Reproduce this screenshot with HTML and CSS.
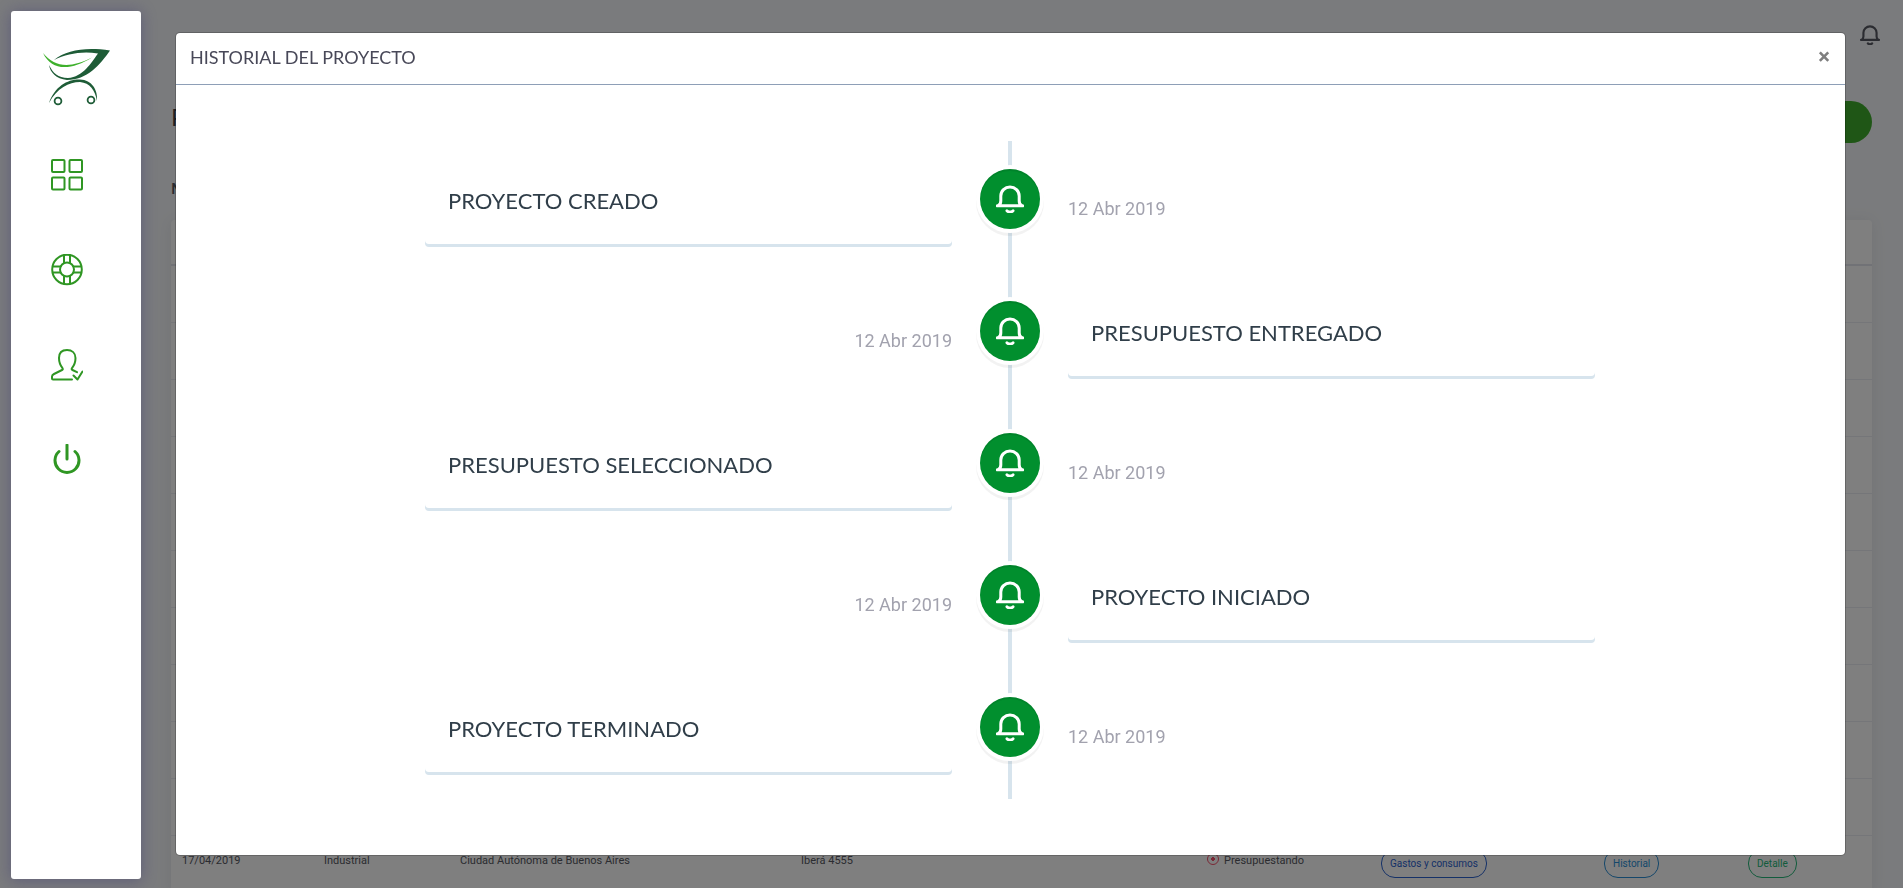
FILE: index.html
```
<!DOCTYPE html>
<html lang="es">

<head>
    <meta charset="UTF-8">
    <meta name="viewport" content="width=device-width, initial-scale=1.0">
    <title>Historial del proyecto</title>
    <link rel="stylesheet" href="styles.css">
</head>

<body>
<svg class="sprite" width="0" height="0" aria-hidden="true">
    <symbol id="bell" viewBox="0 0 28 28">
        <path d="M2 20.800q2.800-1.500 2.800-4.800V11a9.200 9 0 0 1 18.400 0v5q0 3.300 2.800 4.800M1.300 20.800h25.400" />
        <path d="M11 25.800q3 2.500 6 0" />
    </symbol>
</svg>

<nav class="sidebar" aria-label="Principal">
    <a class="logo" href="#" aria-label="Inicio">
        <svg width="68" height="58" viewBox="0 0 68 58">
            <path fill="#1e5c37" d="M11 12C24 2 42-1 67 2.500C57 17 44 32 24 32C13 31 7 24 6 17C10 25 15 30 25 30C40 29 48 15 55 5.500C38 3 24 6 11 12Z" />
            <path fill="#3eb02c" d="M0 5C12 20 28 20 49 9.500C29 22 9 24 0 5Z" />
            <path fill="#1e5c37" d="M6 55C12 38 25 31 37 31.500C49 32 55 42 54 53C52 42 47 35 37 34C26 34 14 40 6 55Z" />
            <circle cx="15" cy="53" r="3.400" fill="none" stroke="#1e5c37" stroke-width="1.800" />
            <circle cx="48" cy="52" r="3.400" fill="none" stroke="#1e5c37" stroke-width="1.800" />
        </svg>
    </a>
    <a class="item" href="#" aria-label="Panel">
        <svg width="32" height="32" viewBox="0 0 32 32">
            <rect x="1" y="1" width="12.500" height="12" rx="1" />
            <rect x="18.500" y="1" width="12.500" height="12" rx="1" />
            <rect x="1" y="18.500" width="12.500" height="12" rx="1" />
            <rect x="18.500" y="18.500" width="12.500" height="12" rx="1" />
        </svg>
    </a>
    <a class="item" href="#" aria-label="Ayuda">
        <svg width="32" height="32" viewBox="0 0 32 32">
            <circle cx="16" cy="15.500" r="14.800" />
            <circle cx="16" cy="15.500" r="7" />
            <path d="M13 1.500v7.500M19 1.500v7.500M13 22v7.500M19 22v7.500M2 12.500h7.500M2 18.500h7.500M22.500 12.500h7.500M22.500 18.500h7.500" />
        </svg>
    </a>
    <a class="item" href="#" aria-label="Usuarios">
        <svg width="32" height="32" viewBox="0 0 32 32">
            <path d="M21 30.500H2q-1 0-1-1v-2q0-1.500 2-2.500l8-4c1-.500 1-1 .500-1.800C9 16 8 14 8 9C8 4 11 1 16 1s8.500 3 8.500 8c0 5-1 7-3.500 10.200c-.600.800-.500 1.300.500 1.800l4.500 2.200" />
            <path d="M22.500 26.500l4 4 5-8" />
        </svg>
    </a>
    <a class="item" href="#" aria-label="Salir">
        <svg width="32" height="32" viewBox="0 0 32 32">
            <path d="M16 1v14M8 7.500a12 12 0 1 0 16 0" />
        </svg>
    </a>
</nav>

<main class="page">
    <header class="topbar">
        <button class="alerts" type="button" aria-label="Notificaciones"><svg width="20" height="20"><use href="#bell" /></svg></button>
    </header>
    <div class="heading">
        <h1>Proyectos</h1>
        <button class="new" type="button">Nuevo</button>
    </div>
    <h2>Mis proyectos</h2>
    <div class="card">
        <table>
            <colgroup>
                <col class="w-date"><col class="w-type"><col class="w-city"><col class="w-street">
                <col class="w-state"><col class="w-costs"><col class="w-history"><col class="w-detail">
            </colgroup>
            <thead>
                <tr><td colspan="8"></td></tr>
            </thead>
            <tbody>
                <tr><td colspan="8"></td></tr>
                <tr><td colspan="8"></td></tr>
                <tr><td colspan="8"></td></tr>
                <tr><td colspan="8"></td></tr>
                <tr><td colspan="8"></td></tr>
                <tr><td colspan="8"></td></tr>
                <tr><td colspan="8"></td></tr>
                <tr><td colspan="8"></td></tr>
                <tr><td colspan="8"></td></tr>
                <tr><td colspan="8"></td></tr>
                <tr>
                    <td>17/04/2019</td>
                    <td>Industrial</td>
                    <td>Ciudad Autónoma de Buenos Aires</td>
                    <td>Iberá 4555</td>
                    <td><span class="dot"></span>Presupuestando</td>
                    <td><button class="pill blue" type="button">Gastos y consumos</button></td>
                    <td><button class="pill sky" type="button">Historial</button></td>
                    <td><button class="pill green" type="button">Detalle</button></td>
                </tr>
            </tbody>
        </table>
    </div>
</main>

<div class="backdrop"></div>

<div class="modal" role="dialog" aria-labelledby="modal-title">
    <div class="modal-header">
        <h5 id="modal-title">HISTORIAL DEL PROYECTO</h5>
        <button class="close" type="button" aria-label="Cerrar">×</button>
    </div>
    <div class="modal-body">
        <div class="timeline">
            <div class="event">
                <div class="content"><h3>PROYECTO CREADO</h3></div>
                <div class="badge"><svg width="28" height="28"><use href="#bell" /></svg></div>
                <span class="date">12 Abr 2019</span>
            </div>
            <div class="event">
                <div class="content"><h3>PRESUPUESTO ENTREGADO</h3></div>
                <div class="badge"><svg width="28" height="28"><use href="#bell" /></svg></div>
                <span class="date">12 Abr 2019</span>
            </div>
            <div class="event">
                <div class="content"><h3>PRESUPUESTO SELECCIONADO</h3></div>
                <div class="badge"><svg width="28" height="28"><use href="#bell" /></svg></div>
                <span class="date">12 Abr 2019</span>
            </div>
            <div class="event">
                <div class="content"><h3>PROYECTO INICIADO</h3></div>
                <div class="badge"><svg width="28" height="28"><use href="#bell" /></svg></div>
                <span class="date">12 Abr 2019</span>
            </div>
            <div class="event">
                <div class="content"><h3>PROYECTO TERMINADO</h3></div>
                <div class="badge"><svg width="28" height="28"><use href="#bell" /></svg></div>
                <span class="date">12 Abr 2019</span>
            </div>
        </div>
    </div>
</div>
</body>

</html>
```
FILE: styles.css
```
* {
    box-sizing: border-box;
}

body {
    margin: 0;
    height: 100vh;
    overflow: hidden;
    background-color: #f5f7fa;
    color: #575962;
    font-family: Roboto, sans-serif;
    font-size: 11px;
}

h1,
h2,
h3,
h5 {
    margin: 0;
    font-family: Lato, sans-serif;
    font-weight: 400;
}

button {
    font-family: inherit;
    cursor: pointer;
}

svg {
    display: block;
    fill: none;
    stroke: currentColor;
    stroke-linecap: round;
    stroke-linejoin: round;
}

.sprite {
    position: absolute;
}

/* sidebar */
.sidebar {
    position: fixed;
    top: 11px;
    bottom: 9px;
    left: 11px;
    z-index: 20;
    width: 130px;
    padding: 37px 0 0 32px;
    display: flex;
    flex-direction: column;
    align-items: flex-start;
    background-color: #fff;
    border-radius: 3px;
    box-shadow: 0 1px 15px 1px rgba(69, 65, 120, .5);
}

.logo {
    margin-bottom: 53px;
}

.logo svg {
    stroke: none;
}

.item {
    margin-left: 8px;
    margin-bottom: 63px;
    color: #2f9623;
}

.item svg {
    stroke-width: 2;
}

.item:last-child svg {
    stroke-width: 3;
}

/* page behind the dialog */
.page {
    margin-left: 171px;
    margin-right: 31px;
}

.topbar {
    height: 101px;
    padding-top: 25px;
    display: flex;
    justify-content: flex-end;
    align-items: flex-start;
}

.alerts {
    margin-right: -8px;
    padding: 0;
    border: 0;
    background: none;
    color: #575962;
}

.alerts svg {
    stroke-width: 3;
}

.heading {
    display: flex;
    justify-content: space-between;
    align-items: flex-start;
}

h1 {
    font-size: 24px;
    line-height: 32px;
    color: #3f4047;
}

.new {
    height: 42px;
    padding: 0 40px;
    border: 0;
    border-radius: 21px;
    background-color: #3eac2c;
    color: #fff;
    font-size: 14px;
}

h2 {
    padding: 35px 0 22px;
    font-size: 16px;
    line-height: 20px;
    font-weight: 700;
}

.card {
    background-color: #fff;
    border-radius: 4px;
    box-shadow: 0 1px 15px 1px rgba(69, 65, 78, .08);
}

table {
    width: 100%;
    table-layout: fixed;
    border-collapse: collapse;
}

td {
    height: 57px;
    padding: 13px 11px;
    border-bottom: 1px solid #ebedf2;
    line-height: 24px;
    vertical-align: top;
}

thead td {
    height: 45px;
    padding: 0;
    border-bottom: 2px solid #e2e5ec;
}

.w-date {
    width: 142px;
}

.w-type {
    width: 136px;
}

.w-city {
    width: 341px;
}

.w-street {
    width: 406px;
}

.w-state {
    width: 174px;
}

.w-costs {
    width: 223px;
}

.w-history {
    width: 144px;
}

.dot {
    display: inline-block;
    width: 12px;
    height: 12px;
    margin-right: 5px;
    border: 1px solid #f4516c;
    border-radius: 50%;
    background: radial-gradient(#f4516c 2px, transparent 2px);
    vertical-align: -1px;
}

.pill {
    display: block;
    height: 29px;
    padding: 0 8px;
    border: 1px solid;
    border-radius: 14px;
    background: none;
    font-size: 10px;
}

.blue {
    color: #2a62d0;
}

.sky {
    color: #2a8fd6;
}

.green {
    color: #25b878;
}

/* dialog */
.backdrop {
    position: fixed;
    inset: 0;
    z-index: 10;
    background-color: rgba(0, 0, 0, .5);
}

.modal {
    position: absolute;
    top: 32px;
    left: 175px;
    right: 57px;
    z-index: 30;
    background-color: #fff;
    background-clip: padding-box;
    border: 1px solid rgba(0, 0, 0, .2);
    border-radius: 5px;
}

.modal-header {
    height: 52px;
    padding: 0 15px 3px 14px;
    display: flex;
    justify-content: space-between;
    align-items: center;
    border-bottom: 1px solid #8e9fb7;
}

.modal-header h5 {
    font-size: 18px;
    color: #484858;
}

.close {
    padding: 0;
    border: 0;
    background: none;
    color: #7f7f7f;
    font-family: Roboto, sans-serif;
    font-size: 22px;
    font-weight: 700;
    line-height: 22px;
}

.modal-body {
    padding: 56px 21px 56px 20px;
}

.timeline {
    position: relative;
    max-width: 1170px;
    margin: 0 auto;
    padding: 28px 0 27px;
}

.timeline::before {
    content: "";
    position: absolute;
    top: 0;
    bottom: 0;
    left: calc(50% - 2px);
    width: 4px;
    background-color: #d7e4ed;
}

.event {
    position: relative;
    display: grid;
    grid-template-columns: 1fr 60px 1fr;
    gap: 28px;
    align-items: start;
}

.event + .event {
    margin-top: 57px;
}

.content {
    padding: 18px 23px 29px;
    border-radius: 4px;
    background-color: #fff;
    box-shadow: 0 3px 0 #d7e4ed;
}

.content h3 {
    font-size: 22px;
    line-height: 28px;
    color: #303e49;
}

.badge {
    height: 60px;
    display: grid;
    place-items: center;
    border-radius: 50%;
    background-color: #018f2e;
    color: #fff;
    box-shadow: 0 0 0 4px #fff, inset 0 2px 0 rgba(0, 0, 0, .08), 0 3px 0 4px rgba(0, 0, 0, .05);
}

.badge svg {
    stroke-width: 3;
}

.date {
    padding-top: 26px;
    font-size: 18px;
    line-height: 28px;
    color: #a2a2ae;
}

/* even events are mirrored */
.event:nth-child(even) .content {
    order: 3;
}

.event:nth-child(even) .badge {
    order: 2;
}

.event:nth-child(even) .date {
    order: 1;
    text-align: right;
}
```
